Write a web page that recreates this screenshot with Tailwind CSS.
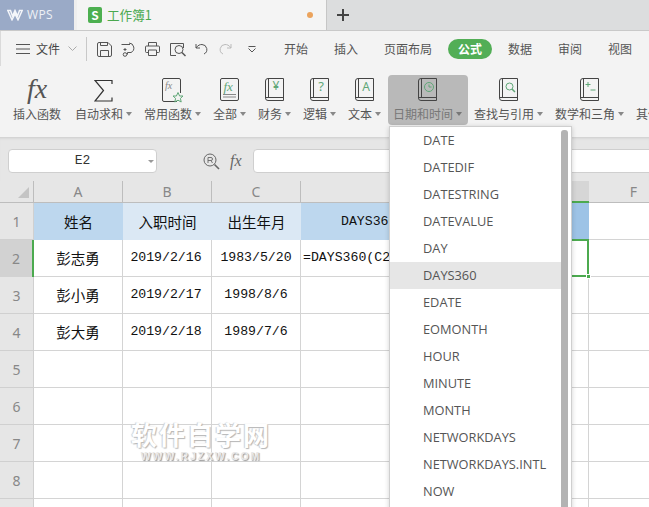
<!DOCTYPE html>
<html lang="zh-CN">
<head>
    <meta charset="UTF-8">
    <meta name="viewport" content="width=device-width, initial-scale=1.0">
    <title>工作簿1 - WPS</title>
    <script src="https://cdn.jsdelivr.net/npm/@tailwindcss/browser@4"></script>
</head>
<body class="bg-[#f3f3f3]">
<div class="relative w-[649px] h-[507px] overflow-hidden flex flex-col font-['Noto_Sans_CJK_SC',sans-serif] text-[#555]">

    <!-- title bar -->
    <div class="h-[31px] shrink-0 flex bg-[#dcddde] border-b border-[#c9c9c9]">
        <div class="w-[74px] bg-[#9aaac7] flex items-center pl-[7px] text-[#eef1f6]">
            <svg width="16" height="12" viewBox="0 0 16 12" fill="none" stroke="#f4f6fa" stroke-width="1.500"><path d="M.8 1.500H3.500L5.500 7L8 1.500L10.500 7L12.500 1.500H15.200L11 10.800L8 5L5 10.800Z"/></svg>
            <span class="ml-[4px] text-[12px] tracking-[0.3px] font-['Open_Sans',sans-serif]">WPS</span>
        </div>
        <div class="w-[3px] bg-[#eeeeee]"></div>
        <div class="w-[250px] bg-[#f4f4f4] border-r border-[#c6c6c6] flex items-center pl-[11px] pr-[13px]">
            <div class="w-[14px] h-[16px] rounded-[2px] bg-[#4caf50] flex items-center justify-center text-white text-[12px] font-bold leading-none">S</div>
            <span class="ml-[5px] text-[12.600px] text-[#4aa84e]">工作簿1</span>
            <span class="ml-auto w-[6px] h-[6px] rounded-full bg-[#eba35c]"></span>
        </div>
        <svg class="ml-[10px] mt-[9px]" width="12" height="12" viewBox="0 0 12 12" stroke="#444" stroke-width="2"><path d="M6 0V12M0 6H12"/></svg>
    </div>

    <!-- menu row -->
    <div class="h-[35px] pt-[1px] shrink-0 flex items-center whitespace-nowrap text-[12px] border-l border-[#dadada]">
        <svg class="ml-[15px]" width="14" height="10" viewBox="0 0 14 10" stroke="#555" stroke-width="1"><path d="M0 .5H14M0 5H14M0 9.5H14"/></svg>
        <span class="ml-[6px] text-[#444]">文件</span>
        <svg class="ml-[8px]" width="9" height="6" viewBox="0 0 9 6" fill="none" stroke="#aaa"><path d="M.5 .5L4.5 4.5L8.5 .5"/></svg>
        <div class="ml-[9px] w-px h-[24px] bg-[#c8c8c8]"></div>
        <!-- quick access -->
        <svg class="ml-[10px]" width="15" height="15" viewBox="0 0 15 15" fill="none" stroke="#555"><path d="M2 .5H11L14.500 4V13A1.500 1.500 0 0 1 13 14.500H2A1.500 1.500 0 0 1 .5 13V2A1.500 1.500 0 0 1 2 .5Z"/><path d="M3.500 14.500V8.500H11.500V14.500M3.500 .5V3.500H10.500V.5"/></svg>
        <svg class="ml-[9px]" width="16" height="15" viewBox="0 0 16 15" fill="none" stroke="#555"><path d="M.5 2.500H9M8 1A5 5 0 0 1 10 10.500H6.500V12.500"/><circle cx="4" cy="12.500" r="1.800"/><path d="M4 6V9M2.500 7.500H5.500"/></svg>
        <svg class="ml-[8px]" width="15" height="14" viewBox="0 0 15 14" fill="none" stroke="#555"><path d="M3.500 4V.5H11.500V4M3.500 10.500H1.500A1 1 0 0 1 .5 9.500V5A1 1 0 0 1 1.500 4H13.500A1 1 0 0 1 14.500 5V9.500A1 1 0 0 1 13.500 10.500H11.500M3.500 8H11.500V13.500H3.500Z"/></svg>
        <svg class="ml-[10px]" width="16" height="15" viewBox="0 0 16 15" fill="none" stroke="#555"><path d="M13.500 6V1.500H.500V13.500H6"/><circle cx="9" cy="7.500" r="4"/><path d="M12 10.500L15.500 14" stroke-width="1.500"/></svg>
        <svg class="ml-[9px]" width="13" height="13" viewBox="0 0 13 13" fill="none" stroke="#555"><path d="M1 1V5H5M1 5C3 2 5 1.500 7 1.500A5 5 0 0 1 9 11"/></svg>
        <svg class="ml-[11px]" width="13" height="13" viewBox="0 0 13 13" fill="none" stroke="#bbb"><path d="M12 1V5H8M12 5C10 2 8 1.500 6 1.500A5 5 0 0 0 4 11"/></svg>
        <svg class="ml-[16px]" width="8" height="7" viewBox="0 0 8 7" fill="none" stroke="#555"><path d="M.5 .5H7.500M.5 2.500L4 6L7.500 2.500"/></svg>
        <!-- tabs -->
        <div class="ml-[28px] flex items-center gap-[26px]">
            <span>开始</span>
            <span>插入</span>
            <span>页面布局</span>
            <span class="-mx-[10px] px-[10px] h-[20px] leading-[20px] rounded-full bg-[#52ae56] text-white font-bold">公式</span>
            <span>数据</span>
            <span>审阅</span>
            <span>视图</span>
        </div>
    </div>

    <!-- ribbon -->
    <div class="h-[71px] shrink-0 flex pl-[7px] pt-[9px] text-[12px] whitespace-nowrap">
        <div class="w-[62px] pl-[6px] shrink-0">
            <div class="inline-flex flex-col items-center">
                <div class="h-[30px] font-['Liberation_Serif',serif] italic text-[28px] leading-[27px] text-[#555]">fx</div>
                <span class="mt-[1px] leading-[16px]">插入函数</span>
            </div>
        </div>
        <div class="w-[69px] pl-[6px] shrink-0">
            <div class="inline-flex flex-col items-center">
                <svg class="h-[30px]" width="19" height="30" viewBox="0 0 19 30" fill="none" stroke="#333" stroke-width="1.200"><path d="M18 9V5.500H1L9.500 15.500L1 26H18V22.500"/></svg>
                <span class="mt-[1px] leading-[16px] flex items-center">自动求和<i class="ml-[3px] border-x-[3px] border-x-transparent border-t-[4px] border-t-[#888]"></i></span>
            </div>
        </div>
        <div class="w-[69px] pl-[6px] shrink-0">
            <div class="inline-flex flex-col items-center">
                <svg class="h-[30px]" width="22" height="30" viewBox="0 0 22 30" fill="none" stroke="#444"><path d="M15 26.500H2A1.500 1.500 0 0 1 .5 25V5A1.500 1.500 0 0 1 2 3.500H17A1.500 1.500 0 0 1 18.500 5V18"/><text x="3" y="14" font-family="Liberation Serif" font-style="italic" font-size="10" fill="#888" stroke="none">fx</text><path d="M16 17.500L17.600 21H21L18.400 23.400L19.200 27L16 25.200L12.800 27L13.600 23.400L11 21H14.400Z" stroke="#5fa777"/></svg>
                <span class="mt-[1px] leading-[16px] flex items-center">常用函数<i class="ml-[3px] border-x-[3px] border-x-transparent border-t-[4px] border-t-[#888]"></i></span>
            </div>
        </div>
        <div class="w-[45px] pl-[6px] shrink-0">
            <div class="inline-flex flex-col items-center">
                <svg class="h-[30px]" width="19" height="30" viewBox="0 0 19 30" fill="none" stroke="#444"><rect x=".5" y="3.500" width="18" height="22" rx="1.500"/><text x="3.500" y="16" font-family="Liberation Serif" font-style="italic" font-size="13" fill="#5fa777" stroke="none">fx</text><path d="M3 19.500H16M3 22H16" stroke="#888"/></svg>
                <span class="mt-[1px] leading-[16px] flex items-center">全部<i class="ml-[3px] border-x-[3px] border-x-transparent border-t-[4px] border-t-[#888]"></i></span>
            </div>
        </div>
        <div class="w-[45px] pl-[6px] shrink-0">
            <div class="inline-flex flex-col items-center">
                <svg class="h-[30px]" width="19" height="30" viewBox="0 0 19 30" fill="none" stroke="#444"><path d="M3 3.500H18.500V25.500H3A2.500 2.500 0 0 1 .5 23V6A2.500 2.500 0 0 1 3 3.500ZM3.500 3.500V22.500M.7 22.500H18.500"/><text x="11" y="15" text-anchor="middle" font-family="Noto Sans" font-size="12" fill="#5fa777" stroke="none">¥</text></svg>
                <span class="mt-[1px] leading-[16px] flex items-center">财务<i class="ml-[3px] border-x-[3px] border-x-transparent border-t-[4px] border-t-[#888]"></i></span>
            </div>
        </div>
        <div class="w-[45px] pl-[6px] shrink-0">
            <div class="inline-flex flex-col items-center">
                <svg class="h-[30px]" width="19" height="30" viewBox="0 0 19 30" fill="none" stroke="#444"><path d="M3 3.500H18.500V25.500H3A2.500 2.500 0 0 1 .5 23V6A2.500 2.500 0 0 1 3 3.500ZM3.500 3.500V22.500M.7 22.500H18.500"/><text x="11" y="16" text-anchor="middle" font-family="Noto Sans" font-size="13" fill="#5fa777" stroke="none">?</text></svg>
                <span class="mt-[1px] leading-[16px] flex items-center">逻辑<i class="ml-[3px] border-x-[3px] border-x-transparent border-t-[4px] border-t-[#888]"></i></span>
            </div>
        </div>
        <div class="w-[45px] pl-[6px] shrink-0">
            <div class="inline-flex flex-col items-center">
                <svg class="h-[30px]" width="19" height="30" viewBox="0 0 19 30" fill="none" stroke="#444"><path d="M3 3.500H18.500V25.500H3A2.500 2.500 0 0 1 .5 23V6A2.500 2.500 0 0 1 3 3.500ZM3.500 3.500V22.500M.7 22.500H18.500"/><text x="11" y="16" text-anchor="middle" font-family="Noto Sans" font-size="12" fill="#5fa777" stroke="none">A</text></svg>
                <span class="mt-[1px] leading-[16px] flex items-center">文本<i class="ml-[3px] border-x-[3px] border-x-transparent border-t-[4px] border-t-[#888]"></i></span>
            </div>
        </div>
        <div class="ml-px w-[80px] pl-[5px] shrink-0 h-[50px] rounded-[4px] bg-[#b9b9b9] text-[#777]">
            <div class="inline-flex flex-col items-center">
                <svg class="h-[30px]" width="19" height="30" viewBox="0 0 19 30" fill="none" stroke="#444"><path d="M3 3.500H18.500V25.500H3A2.500 2.500 0 0 1 .5 23V6A2.500 2.500 0 0 1 3 3.500ZM3.500 3.500V22.500M.7 22.500H18.500"/><circle cx="11" cy="12" r="4.500" stroke="#5fa777"/><path d="M11 9.500V12H13.500" stroke="#5fa777"/></svg>
                <span class="mt-[1px] leading-[16px] flex items-center">日期和时间<i class="ml-[3px] border-x-[3px] border-x-transparent border-t-[4px] border-t-[#777]"></i></span>
            </div>
        </div>
        <div class="w-[81px] pl-[6px] shrink-0">
            <div class="inline-flex flex-col items-center">
                <svg class="h-[30px]" width="19" height="30" viewBox="0 0 19 30" fill="none" stroke="#444"><path d="M3 3.500H18.500V25.500H3A2.500 2.500 0 0 1 .5 23V6A2.500 2.500 0 0 1 3 3.500ZM3.500 3.500V22.500M.7 22.500H18.500"/><circle cx="10.500" cy="11.500" r="3.500" stroke="#5fa777"/><path d="M13 14L16 17" stroke="#5fa777" stroke-width="1.500"/></svg>
                <span class="mt-[1px] leading-[16px] flex items-center">查找与引用<i class="ml-[3px] border-x-[3px] border-x-transparent border-t-[4px] border-t-[#888]"></i></span>
            </div>
        </div>
        <div class="w-[81px] pl-[6px] shrink-0">
            <div class="inline-flex flex-col items-center">
                <svg class="h-[30px]" width="19" height="30" viewBox="0 0 19 30" fill="none" stroke="#444"><path d="M3 3.500H18.500V25.500H3A2.500 2.500 0 0 1 .5 23V6A2.500 2.500 0 0 1 3 3.500ZM3.500 3.500V22.500M.7 22.500H18.500"/><path d="M5.500 9.500H10.500M8 7V12M10.500 15H15.500" stroke="#5fa777"/></svg>
                <span class="mt-[1px] leading-[16px] flex items-center">数学和三角<i class="ml-[3px] border-x-[3px] border-x-transparent border-t-[4px] border-t-[#888]"></i></span>
            </div>
        </div>
        <div class="pl-[6px] shrink-0 pt-[31px] leading-[16px]">其他函数</div>
    </div>

    <!-- formula bar -->
    <div class="h-[44px] shrink-0 bg-[#e6e6e6] shadow-[inset_0_3px_3px_-2px_rgba(0,0,0,0.12)] flex items-start pt-[12px] pl-[8px] whitespace-nowrap">
        <div class="w-[149px] shrink-0 h-[24px] bg-white border border-[#cfcfcf] rounded-[4px] flex items-center justify-center relative font-['Liberation_Mono',monospace] text-[13px] text-[#333]">
            E2
            <i class="absolute right-[2px] top-[10px] border-x-[3px] border-x-transparent border-t-[3px] border-t-[#999]"></i>
        </div>
        <svg class="ml-[46px] mt-[4px] shrink-0" width="17" height="17" viewBox="0 0 17 17" fill="none" stroke="#666"><circle cx="7" cy="7" r="6"/><path d="M5 10V4.500H8A1.500 1.500 0 0 1 8 7.500H5M8 7.500L9.500 10" stroke-width=".9"/><path d="M11.500 11.500L16 16" stroke-width="1.600"/></svg>
        <span class="ml-[10px] mt-[2px] font-['Liberation_Serif',serif] italic text-[16px] leading-[20px] text-[#666]">fx</span>
        <div class="ml-[11px] w-[420px] shrink-0 h-[24px] bg-white border border-[#cfcfcf] rounded-[4px]"></div>
    </div>

    <!-- sheet -->
    <div class="flex-1 grid grid-cols-[34px_89px_89px_89px_199px_89px_1fr] auto-rows-[37px] grid-rows-[22px] bg-white font-['Liberation_Mono','Noto_Sans_CJK_SC',monospace] text-[13.200px] text-[#111] whitespace-nowrap">
        <!-- column headers -->
        <div class="bg-[#e6e6e6] border-b border-r border-[#bdbdbd] relative"><i class="absolute right-[4px] bottom-[4px] border-l-[11px] border-l-transparent border-b-[11px] border-b-[#c4c4c4]"></i></div>
        <div class="bg-[#e6e6e6] border-b border-r border-[#bdbdbd] flex items-center justify-center font-['Noto_Sans',sans-serif] text-[14px] text-[#888]">A</div>
        <div class="bg-[#e6e6e6] border-b border-r border-[#bdbdbd] flex items-center justify-center font-['Noto_Sans',sans-serif] text-[14px] text-[#888]">B</div>
        <div class="bg-[#e6e6e6] border-b border-r border-[#bdbdbd] flex items-center justify-center font-['Noto_Sans',sans-serif] text-[14px] text-[#888]">C</div>
        <div class="bg-[#e6e6e6] border-b border-r border-[#bdbdbd] flex items-center justify-center font-['Noto_Sans',sans-serif] text-[14px] text-[#888]">D</div>
        <div class="bg-[#d6d6d6] border-b-2 border-[#4caa4f] flex items-center justify-center font-['Noto_Sans',sans-serif] text-[14px] text-[#666]">E</div>
        <div class="bg-[#e6e6e6] border-b border-[#bdbdbd] flex items-center justify-center font-['Noto_Sans',sans-serif] text-[14px] text-[#888] pl-[29px]">F</div>

        <!-- row 1 -->
        <div class="bg-[#e6e6e6] border-r border-b border-[#d0d0d0] flex items-center justify-center font-['Noto_Sans',sans-serif] text-[14px] text-[#888]">1</div>
        <div class="bg-[#bdd7ee] flex items-center justify-center font-['Noto_Sans_CJK_SC',sans-serif] text-[14.500px]">姓名</div>
        <div class="bg-[#dbe8f4] flex items-center justify-center font-['Noto_Sans_CJK_SC',sans-serif] text-[14.500px]">入职时间</div>
        <div class="bg-[#dbe8f4] flex items-center justify-center font-['Noto_Sans_CJK_SC',sans-serif] text-[14.500px]">出生年月</div>
        <div class="bg-[#bdd7ee] flex items-center pl-[40px]">DAYS360</div>
        <div class="bg-[#9dc3e6]"></div>
        <div class="border-b border-[#d4d4d4]"></div>

        <!-- row 2 -->
        <div class="bg-[#d2d2d2] border-r-2 border-[#4caa4f] flex items-center justify-center font-['Noto_Sans',sans-serif] text-[14px] text-[#888]">2</div>
        <div class="border-r border-b border-[#d4d4d4] flex items-center justify-center font-['Noto_Sans_CJK_SC',sans-serif] text-[14.500px]">彭志勇</div>
        <div class="border-r border-b border-[#d4d4d4] flex items-center justify-center pr-[2px]">2019/2/16</div>
        <div class="border-r border-b border-[#d4d4d4] flex items-center justify-center">1983/5/20</div>
        <div class="border-b border-[#d4d4d4] flex items-center pl-[2px]">=DAYS360(C2</div>
        <div class="relative">
            <div class="absolute -top-px left-0 right-0 bottom-0 border-2 border-[#4caa4f]"></div>
            <i class="absolute -right-[2px] -bottom-[2px] w-[5px] h-[5px] bg-[#4caa4f] border border-white"></i>
        </div>
        <div class="border-b border-[#d4d4d4]"></div>

        <!-- row 3 -->
        <div class="bg-[#e6e6e6] border-r border-b border-[#d0d0d0] flex items-center justify-center font-['Noto_Sans',sans-serif] text-[14px] text-[#888]">3</div>
        <div class="border-r border-b border-[#d4d4d4] flex items-center justify-center font-['Noto_Sans_CJK_SC',sans-serif] text-[14.500px]">彭小勇</div>
        <div class="border-r border-b border-[#d4d4d4] flex items-center justify-center pr-[2px]">2019/2/17</div>
        <div class="border-r border-b border-[#d4d4d4] flex items-center justify-center">1998/8/6</div>
        <div class="border-r border-b border-[#d4d4d4]"></div>
        <div class="border-r border-b border-[#d4d4d4]"></div>
        <div class="border-b border-[#d4d4d4]"></div>

        <!-- row 4 -->
        <div class="bg-[#e6e6e6] border-r border-b border-[#d0d0d0] flex items-center justify-center font-['Noto_Sans',sans-serif] text-[14px] text-[#888]">4</div>
        <div class="border-r border-b border-[#d4d4d4] flex items-center justify-center font-['Noto_Sans_CJK_SC',sans-serif] text-[14.500px]">彭大勇</div>
        <div class="border-r border-b border-[#d4d4d4] flex items-center justify-center pr-[2px]">2019/2/18</div>
        <div class="border-r border-b border-[#d4d4d4] flex items-center justify-center">1989/7/6</div>
        <div class="border-r border-b border-[#d4d4d4]"></div>
        <div class="border-r border-b border-[#d4d4d4]"></div>
        <div class="border-b border-[#d4d4d4]"></div>

        <!-- row 5 -->
        <div class="bg-[#e6e6e6] border-r border-b border-[#d0d0d0] flex items-center justify-center font-['Noto_Sans',sans-serif] text-[14px] text-[#888]">5</div>
        <div class="border-r border-b border-[#d4d4d4]"></div>
        <div class="border-r border-b border-[#d4d4d4]"></div>
        <div class="border-r border-b border-[#d4d4d4]"></div>
        <div class="border-r border-b border-[#d4d4d4]"></div>
        <div class="border-r border-b border-[#d4d4d4]"></div>
        <div class="border-b border-[#d4d4d4]"></div>

        <!-- row 6 -->
        <div class="bg-[#e6e6e6] border-r border-b border-[#d0d0d0] flex items-center justify-center font-['Noto_Sans',sans-serif] text-[14px] text-[#888]">6</div>
        <div class="border-r border-b border-[#d4d4d4]"></div>
        <div class="border-r border-b border-[#d4d4d4]"></div>
        <div class="border-r border-b border-[#d4d4d4]"></div>
        <div class="border-r border-b border-[#d4d4d4]"></div>
        <div class="border-r border-b border-[#d4d4d4]"></div>
        <div class="border-b border-[#d4d4d4]"></div>

        <!-- row 7 -->
        <div class="bg-[#e6e6e6] border-r border-b border-[#d0d0d0] flex items-center justify-center font-['Noto_Sans',sans-serif] text-[14px] text-[#888]">7</div>
        <div class="border-r border-b border-[#d4d4d4]"></div>
        <div class="border-r border-b border-[#d4d4d4]"></div>
        <div class="border-r border-b border-[#d4d4d4]"></div>
        <div class="border-r border-b border-[#d4d4d4]"></div>
        <div class="border-r border-b border-[#d4d4d4]"></div>
        <div class="border-b border-[#d4d4d4]"></div>

        <!-- row 8 -->
        <div class="bg-[#e6e6e6] border-r border-b border-[#d0d0d0] flex items-center justify-center font-['Noto_Sans',sans-serif] text-[14px] text-[#888]">8</div>
        <div class="border-r border-b border-[#d4d4d4]"></div>
        <div class="border-r border-b border-[#d4d4d4]"></div>
        <div class="border-r border-b border-[#d4d4d4]"></div>
        <div class="border-r border-b border-[#d4d4d4]"></div>
        <div class="border-r border-b border-[#d4d4d4]"></div>
        <div class="border-b border-[#d4d4d4]"></div>

        <!-- row 9 -->
        <div class="bg-[#e6e6e6] border-r border-[#d0d0d0]"></div>
        <div class="border-r border-[#d4d4d4]"></div>
        <div class="border-r border-[#d4d4d4]"></div>
        <div class="border-r border-[#d4d4d4]"></div>
        <div class="border-r border-[#d4d4d4]"></div>
        <div class="border-r border-[#d4d4d4]"></div>
        <div></div>
    </div>

    <!-- watermark -->
    <div class="absolute left-[131px] top-[420px] w-[140px] flex flex-col items-center pointer-events-none font-bold text-white">
        <span class="text-[26px] leading-[28px] tracking-[2px] [text-shadow:1px_1px_1px_#b5b5b5,-1px_0_1px_#cfcfcf]">软件自学网</span>
        <span class="mt-[3px] text-[10.500px] leading-[10px] tracking-[1.900px] text-[#e8e8e8] font-['Liberation_Sans',sans-serif] [text-shadow:1px_1px_1px_#999999]">WWW.RJZXW.COM</span>
    </div>

    <!-- date/time function menu -->
    <div class="absolute left-[389px] top-[126px] w-[183px] h-[390px] bg-white border border-[#cfcfcf] shadow-[0_1px_5px_rgba(0,0,0,0.18)] flex font-['Open_Sans',sans-serif] text-[12.800px] text-[#555]">
        <div class="w-[171px] flex flex-col">
            <div class="h-[27px] shrink-0 pl-[33px] pt-px flex items-center">DATE</div>
            <div class="h-[27px] shrink-0 pl-[33px] pt-px flex items-center">DATEDIF</div>
            <div class="h-[27px] shrink-0 pl-[33px] pt-px flex items-center">DATESTRING</div>
            <div class="h-[27px] shrink-0 pl-[33px] pt-px flex items-center">DATEVALUE</div>
            <div class="h-[27px] shrink-0 pl-[33px] pt-px flex items-center">DAY</div>
            <div class="h-[27px] shrink-0 pl-[33px] pt-px flex items-center bg-[#e6e6e6]">DAYS360</div>
            <div class="h-[27px] shrink-0 pl-[33px] pt-px flex items-center">EDATE</div>
            <div class="h-[27px] shrink-0 pl-[33px] pt-px flex items-center">EOMONTH</div>
            <div class="h-[27px] shrink-0 pl-[33px] pt-px flex items-center">HOUR</div>
            <div class="h-[27px] shrink-0 pl-[33px] pt-px flex items-center">MINUTE</div>
            <div class="h-[27px] shrink-0 pl-[33px] pt-px flex items-center">MONTH</div>
            <div class="h-[27px] shrink-0 pl-[33px] pt-px flex items-center">NETWORKDAYS</div>
            <div class="h-[27px] shrink-0 pl-[33px] pt-px flex items-center">NETWORKDAYS.INTL</div>
            <div class="h-[27px] shrink-0 pl-[33px] pt-px flex items-center">NOW</div>
        </div>
        <div class="w-[7px] mt-[3px] rounded-t-[3px] bg-[#b3b3b3]"></div>
    </div>
</div>
</body>
</html>
